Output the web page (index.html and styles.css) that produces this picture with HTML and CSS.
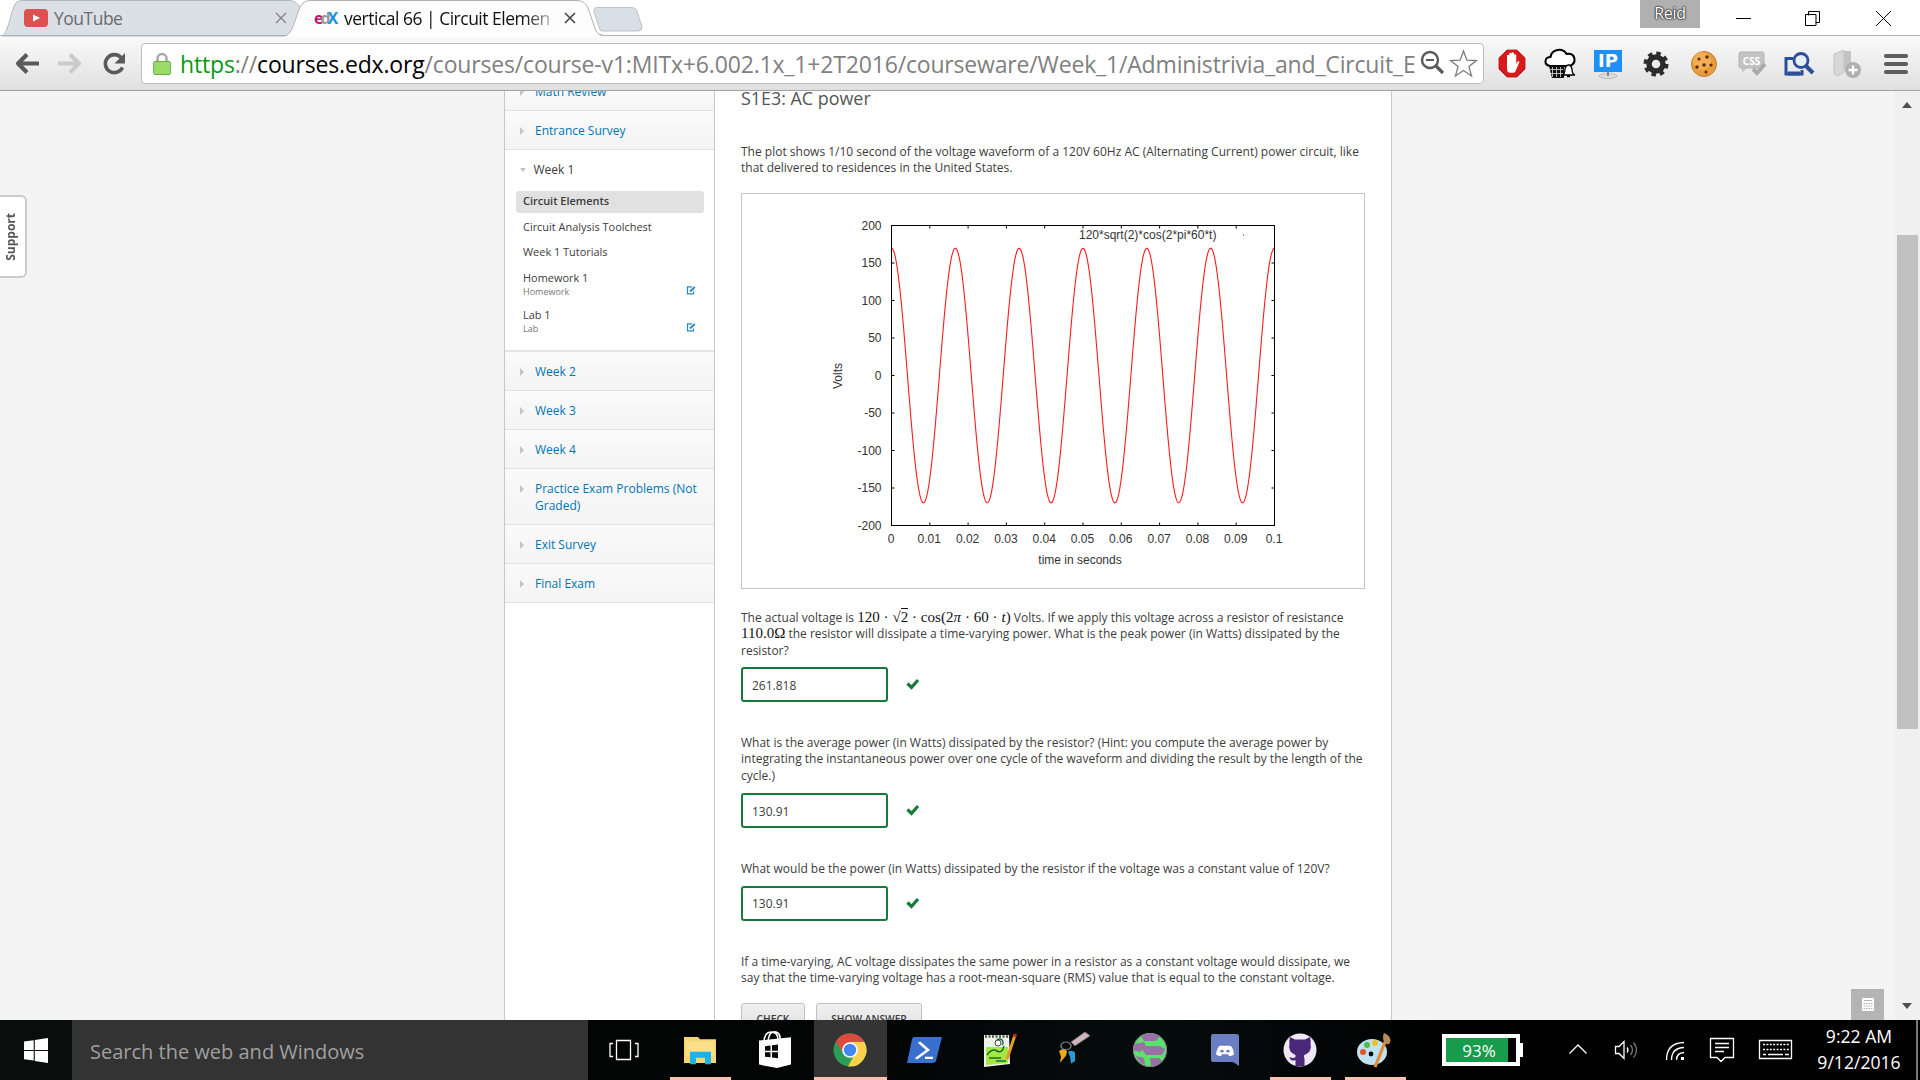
FILE: index.html
```html
<!DOCTYPE html>
<html lang="en">
<head>
<meta charset="utf-8">
<title>vertical 66 | Circuit Elements | edX</title>
<link rel="stylesheet" href="styles.css">
</head>
<body>
<div class="screen">
<header class="tabstrip">
  <svg class="tabshapes" width="660" height="37" viewBox="0 0 660 37">
    <path d="M2 36C9 34 11 6 17 2Q19 .5 23 .5H290Q297 1 300 8L309 36Z" fill="#dbe0e7" stroke="#b5b8bd"/>
    <path d="M600 30L594 12Q593 8 597 7.500H632Q636 8 637 11L642 27Q642 31 638 31H604Q601 31 600 30Z" fill="#d9dfe7" stroke="#bfc2c6"/>
    <path d="M284 37C294 34 297 8 303 3Q306 .5 310 .5H578Q585 1 588 8L596 31Q598 36 606 37Z" fill="#fdfdfd"/>
    <path d="M0 35.500H286C294 33 297 8 303 3Q306 .5 310 .5H578Q585 1 588 8L596 31Q598 35 604 35.500H660" fill="none" stroke="#b2b2b2"/>
  </svg>
  <div class="tab tab-yt">
    <svg width="24" height="18" viewBox="0 0 24 18"><rect width="24" height="18" rx="4" fill="#de5151"/><path d="M9 5.500v7l7-3.500z" fill="#fff"/></svg>
    <span>YouTube</span>
    <svg class="x" width="12" height="12" viewBox="0 0 12 12"><path d="M1 1l10 10M11 1L1 11" stroke="#858585" stroke-width="1.400"/></svg>
  </div>
  <div class="tab tab-edx">
    <span class="edx"><b class="e">e</b><b class="d">d</b><b class="ex">X</b></span>
    <span class="fade">vertical 66 | Circuit Elemen</span>
    <svg class="x" width="12" height="12" viewBox="0 0 12 12"><path d="M1 1l10 10M11 1L1 11" stroke="#444" stroke-width="1.600"/></svg>
  </div>
  <div class="profile">Reid</div>
  <svg class="winctl" width="160" height="18" viewBox="0 0 160 18" fill="none" stroke="#000"><path d="M0 8.500h15M72.500 5.500v-4h11v11h-4M69.500 4.500h10.500v11h-10.500zM140 1l15 15M155 1l-15 15"/></svg>
</header>
<nav class="toolbar">
  <svg class="navs" width="141" height="54" viewBox="0 0 141 54" fill="none" stroke-width="4.200" stroke-linejoin="round">
    <path d="M39 27.500H19M27 18.500l-9 9 9 9" stroke="#5a5a5a"/><path d="M58 27.500h20M70 18.500l9 9-9 9" stroke="#cbcbcb"/>
    <path d="M121 21.500a9 9 0 1 0 1.500 10" stroke="#5a5a5a" stroke-width="3.600"/><path d="M125 17v10.500h-10.500z" fill="#5a5a5a" stroke="none"/>
  </svg>
  <div class="omnibox">
    <svg class="lock" width="18" height="24" viewBox="0 0 18 24"><path d="M4.500 11V6.500a4.500 4.500 0 0 1 9 0V11" fill="none" stroke="#a9a9a9" stroke-width="2.500"/><rect x=".7" y="9.500" width="16.600" height="13" rx="1" fill="#9bdb6c" stroke="#63b236"/></svg>
    <span class="url"><span class="g">https</span>://<span class="k">courses.edx.org</span>/courses/course-v1:MITx+6.002.1x_1+2T2016/courseware/Week_1/Administrivia_and_Circuit_E</span>
    <svg class="omni-icons" width="60" height="30" viewBox="0 0 60 30" fill="none"><circle cx="12" cy="11" r="8" stroke="#5a5a5a" stroke-width="2.400"/><path d="M8 11h8" stroke="#5a5a5a" stroke-width="2"/><path d="M18 17l7 7" stroke="#5a5a5a" stroke-width="3.200"/><path d="M45.500 2l3.400 9.200 9.600.4-7.600 6 2.700 9.400-8.100-5.500-8.100 5.500 2.700-9.400-7.600-6 9.600-.4z" stroke="#7d7d7d" stroke-width="1.300"/></svg>
  </div>
  <svg class="exts" width="436" height="54" viewBox="1484 36 436 54">
    <path d="M1507 50h10l8 8v11l-8 8h-10l-8-8V58z" fill="#d91a1a" stroke="#b40d0d" stroke-width=".8"/><path d="M1507 61v-5.500q1.200-1.500 2.200 0V62v-8.500q1.200-1.500 2.400 0V61v-8q1.200-1.500 2.400 0v9-7q1.200-1.500 2.200 0v9l1.400-2.500q2-1 1.700.7l-3 7q-1 3.600-3 3.600h-3.300q-3 0-3-4z" fill="#fff"/>
    <path d="M1550 66q-5-1-4.500-5 .5-4 5-4 1-6 7-7 6-1 9 4 7-1 8 5 .6 5-5 7z" fill="#fff" stroke="#000" stroke-width="2"/><path d="M1549 66h15v12h-12z" fill="#111"/><path d="M1552.500 67v10M1556.500 67v10M1560.500 67v10M1550 69.500h13M1550 73.500h13" stroke="#ddd" stroke-width=".8"/><path d="M1562 75q3-1 3-6 1-4 3.500-4t3.500 4q0 5 3 6zM1567 76.500h3" fill="#fff" stroke="#000" stroke-width="1.300"/>
    <rect x="1594" y="50" width="28" height="22" fill="#1e90f5"/><ellipse cx="1608" cy="76" rx="9" ry="2.500" fill="#ddd" stroke="#aaa" stroke-width=".7"/><path d="M1608 72v4" stroke="#888" stroke-width="2"/><text x="1608" y="66.500" text-anchor="middle" class="svg-ip">IP</text>
    <g fill="none" stroke="#2c2c2c"><circle cx="1656" cy="64" r="7" stroke-width="5.500"/><circle cx="1656" cy="64" r="10.600" stroke-width="3.800" stroke-dasharray="4.400 3.920"/></g>
    <circle cx="1704" cy="64" r="12.500" fill="#e79b3b" stroke="#c87923"/><circle cx="1702" cy="61" r="9" fill="#f5b75c" opacity=".7"/><g fill="#5e2c10"><circle cx="1699" cy="59" r="1.600"/><circle cx="1707" cy="57" r="1.800"/><circle cx="1704" cy="65" r="1.800"/><circle cx="1711" cy="65" r="1.600"/><circle cx="1697" cy="67" r="1.800"/><circle cx="1706" cy="72" r="1.500"/></g>
    <rect x="1739" y="52" width="25" height="16" rx="2" fill="#c3c3c3" stroke="#b4b4b4"/><text x="1751.500" y="64.500" text-anchor="middle" class="svg-css">CSS</text><path d="M1753 69l4 4 8-9" stroke="#aaa" stroke-width="4" fill="none"/><path d="M1742 68v5l5-5" fill="#c3c3c3"/>
    <g fill="none" stroke="#2b4f9b"><path d="M1793 58.500h-7V74h16v-4" stroke-width="3"/><path d="M1788 73.500h12" stroke-width="4"/><circle cx="1801" cy="60.500" r="7" stroke-width="2.800" fill="#e9eef6"/><path d="M1806 66l7 7" stroke-width="4"/></g>
    <path d="M1834 74V54l10-4v22l-6 4z" fill="#d7d7d7" stroke="#c4c4c4"/><path d="M1844 51h7v18h-7z" fill="#c4c4c4"/><circle cx="1853" cy="70" r="8" fill="#b0b0b0"/><path d="M1848.500 70h9M1853 65.500v9" stroke="#fff" stroke-width="2.400"/>
    <path d="M1886 56h20M1886 64h20M1886 72h20" stroke="#5d5d5d" stroke-width="4.200" stroke-linecap="round"/>
  </svg>
</nav>
<main class="viewport">
  <div class="left-gutter"><div class="support"><span>Support</span></div></div>
  <aside class="side">
    <div class="row first"><i></i><span>Math Review</span></div>
    <div class="row"><i></i><span>Entrance Survey</span></div>
    <div class="open">
      <div class="open-head"><i></i><span>Week 1</span></div>
      <div class="item sel">Circuit Elements</div>
      <div class="item i2">Circuit Analysis Toolchest</div>
      <div class="item i3">Week 1 Tutorials</div>
      <div class="item two hw"><div><span>Homework 1</span><small>Homework</small></div><svg width="10" height="9" viewBox="0 0 10 9" fill="none" stroke="#2a88c0"><path d="M6 .8H1.500v7h6V5.500" stroke-width="1.200"/><path d="M4 5.500L8.800 1" stroke-width="2"/></svg></div>
      <div class="item two lab"><div><span>Lab 1</span><small>Lab</small></div><svg width="10" height="9" viewBox="0 0 10 9" fill="none" stroke="#2a88c0"><path d="M6 .8H1.500v7h6V5.500" stroke-width="1.200"/><path d="M4 5.500L8.800 1" stroke-width="2"/></svg></div>
    </div>
    <div class="row"><i></i><span>Week 2</span></div>
    <div class="row"><i></i><span>Week 3</span></div>
    <div class="row"><i></i><span>Week 4</span></div>
    <div class="row tall"><i></i><span>Practice Exam Problems (Not<br>Graded)</span></div>
    <div class="row"><i></i><span>Exit Survey</span></div>
    <div class="row"><i></i><span>Final Exam</span></div>
  </aside>
  <section class="content">
    <h2>S1E3: AC power</h2>
    <p class="p1">The plot shows 1/10 second of the voltage waveform of a 120V 60Hz AC (Alternating Current) power circuit, like<br>that delivered to residences in the United States.</p>
    <div class="figure"><svg id="plot" class="plot" width="622" height="393" viewBox="742 194 622 393"></svg></div>
    <p class="p2">The actual voltage is <span class="math wide">120 · <span class="rad">√</span><span class="over">2</span> · cos<span class="paren">(</span>2<i>π</i> · 60 · <i>t</i><span class="paren">)</span></span> Volts. If we apply this voltage across a resistor of resistance<br><span class="math">110.0Ω</span> the resistor will dissipate a time-varying power. What is the peak power (in Watts) dissipated by the<br>resistor?</p>
    <div class="answer"><div class="box">261.818</div><svg width="14" height="12" viewBox="0 0 14 12"><path d="M1.500 5.500l4 4L12 2" fill="none" stroke="#177a3b" stroke-width="3.200"/></svg></div>
    <p class="p3">What is the average power (in Watts) dissipated by the resistor? (Hint: you compute the average power by<br>integrating the instantaneous power over one cycle of the waveform and dividing the result by the length of the<br>cycle.)</p>
    <div class="answer"><div class="box">130.91</div><svg width="14" height="12" viewBox="0 0 14 12"><path d="M1.500 5.500l4 4L12 2" fill="none" stroke="#177a3b" stroke-width="3.200"/></svg></div>
    <p class="p4">What would be the power (in Watts) dissipated by the resistor if the voltage was a constant value of 120V?</p>
    <div class="answer"><div class="box b3">130.91</div><svg width="14" height="12" viewBox="0 0 14 12"><path d="M1.500 5.500l4 4L12 2" fill="none" stroke="#177a3b" stroke-width="3.200"/></svg></div>
    <p class="p5">If a time-varying, AC voltage dissipates the same power in a resistor as a constant voltage would dissipate, we<br>say that the time-varying voltage has a root-mean-square (RMS) value that is equal to the constant voltage.</p>
    <div class="buttons"><div class="btn check">CHECK</div><div class="btn show">SHOW ANSWER</div></div>
  </section>
  <div class="right-gutter"><div class="calc"><svg width="12" height="13" viewBox="0 0 12 13"><rect width="12" height="13" rx="1" fill="#fff"/><path d="M2 2.500h8" stroke="#b4b4b4"/><path d="M1.500 5.500h9M1.500 8h9M1.500 10.500h9" stroke="#b4b4b4" stroke-dasharray="1.500 1"/></svg></div></div>
  <div class="scroll"><b class="up"></b><div class="thumb"></div><b class="down"></b></div>
</main>
<footer class="taskbar">
  <div class="start"><svg width="24" height="25" viewBox="0 0 24 25" fill="#fff"><path d="M0 3.500l9.700-1.300V12H0zM10.800 2L24 0v12H10.800zM0 13h9.700v9.500L0 21.200zM10.800 13H24v12l-13.200-2z"/></svg></div>
  <div class="search">Search the web and Windows</div>
  <svg class="tasks" width="826" height="60" viewBox="588 1020 826 60">
    <g fill="none" stroke="#fff" stroke-width="1.300"><path d="M616.500 1040.500h14v19h-14zM613 1043.500h-3v13h3M635 1043.500h3v13h-3"/></g>
    <path d="M814 1020h73v60h-73z" fill="#343434"/><path d="M670 1077h61v3h-61zM814 1077h73v3h-73zM1270 1077h61v3h-61zM1345 1077h61v3h-61z" fill="#fbc1ae"/>
    <g transform="matrix(1 0 0 .74 0 269.600)"><path d="M684 1040v-3h14l2 3h16v32h-32z" fill="#f6d66f"/><path d="M686 1043h28v20h-28z" fill="#fbe08b"/><path d="M690 1074v-17h21v17h-6v-9h-9v9h-6z" fill="#1cb2ee"/></g>
    <g transform="matrix(1 0 0 .857 0 145)"><path d="M759 1045l32-4v32l-14 4-18-4z" fill="#fff"/><path d="M764 1048q0-13 7-13t7 9M768 1047q1-14 8-12 5 2 4 10" fill="none" stroke="#fff" stroke-width="1.600"/><path d="M765 1051.500l5.500-.8v6.300h-5.500zM772 1050.500l6-.8v7.300h-6zM765 1058.500h5.500v6l-5.500-.6zM772 1058.500h6v7l-6-.7z" fill="#0a0a0a"/></g>
    <g transform="translate(0 -10)"><circle cx="850" cy="1060" r="16.500" fill="#2c9c57"/><path d="M864.300 1051.800A16.500 16.500 0 0 1 848 1076.400L857 1060 850 1051.800z" fill="#fdd14b"/><path d="M835.700 1051.800A16.500 16.500 0 0 1 864.300 1051.800H850l-7 11z" fill="#dc4b3e"/><circle cx="850" cy="1060" r="7.800" fill="#fff"/><circle cx="850" cy="1060" r="6.200" fill="#4285f4"/></g>
    <g transform="matrix(1 0 0 .72 0 290.400)"><path d="M914 1037h28l-6 33q-.5 3-4 3h-25l5-33q1-3 2-3z" fill="#3a70cd"/><path d="M919 1044l9 11-12 12M925 1066h8" fill="none" stroke="#fff" stroke-width="3"/></g>
    <g><path d="M984 1035h25l1 29-26 3z" fill="#eef3ea"/><path d="M986 1047h22v16l-22 2z" fill="#a5e844"/><path d="M985 1036.500h23" stroke="#555" stroke-width="2.500" stroke-dasharray="2 1.500"/><path d="M987 1055q5-7 10-4t7-5M989 1058h12M997 1045a3.500 3.500 0 1 1 5 0M996 1061h10" fill="none" stroke="#176b28" stroke-width="1.500"/><circle cx="998" cy="1043" r="3" fill="#fff" stroke="#444"/><path d="M1007 1059l8-24" stroke="#e59b26" stroke-width="3"/><path d="M1014.500 1037l1-3" stroke="#c22" stroke-width="3"/></g>
    <g transform="matrix(1 0 0 .77 0 235.800)"><path d="M1071 1047l14-13 5 5-15 13z" fill="#c9b9bd" stroke="#85656d"/><circle cx="1066" cy="1052" r="5" fill="none" stroke="#777" stroke-width="1.500"/><path d="M1059 1059q4-5 8 0l-1 6-6 9 1-8z" fill="#eda81f"/><path d="M1068 1060q4-4 7 1v11l-4 3-1-9z" fill="#279bd4"/></g>
    <g><circle cx="1150" cy="1050" r="17" fill="#58e36b"/><path d="M1141 1036q9-5 19 0l-4 5h-12zM1135 1044l9-2 2 5-6 5-7-2zM1144 1046h16l5 3-3 6h-16l-3-4zM1136 1056l8 2 1 7q-6-2-9-9zM1150 1058h9l3 3q-5 6-11 5z" fill="#9b70a6"/><circle cx="1150" cy="1050" r="16.500" fill="none" stroke="#8c7a98"/></g>
    <g transform="matrix(1 0 0 .78 0 228.300)"><path d="M1213 1033h23q3 0 3 3v38l-6-5h-20q-2 0-2-3v-30q0-3 2-3z" fill="#6a7ec4"/><path d="M1216 1059q1-9 4-11h10q3 1 4 11-2 3-5 2l-1-2h-6l-1 2q-3 1-5-2z" fill="#fff"/><circle cx="1222" cy="1055" r="1.700" fill="#6a7ec4"/><circle cx="1228" cy="1055" r="1.700" fill="#6a7ec4"/></g>
    <g transform="translate(0 -10)"><circle cx="1300" cy="1060" r="16.500" fill="#eee8f5"/><path d="M1290 1047l5 2.500h10l5-2.500q1 4 .5 6 2 9-6 12-1 0 0 4v7h-9v-6q-5 2-6-3 4 2 6 0v-2q-8-3-6-12-.5-2 .5-6z" fill="#49287a"/></g>
    <g><ellipse cx="1372" cy="1052" rx="15" ry="13" fill="#bfe2f0"/><circle cx="1363" cy="1052" r="3" fill="#e2522f"/><circle cx="1367" cy="1045" r="3" fill="#55b848"/><circle cx="1375" cy="1043" r="3" fill="#eebf2b"/><circle cx="1371" cy="1054" r="2.400" fill="#05080b"/><path d="M1375 1067l10-25" stroke="#e38d3a" stroke-width="3.200"/><path d="M1384 1042q-2-5 0-9 8 3 6 10-3 3-6-1z" fill="#bd8a57"/></g>
  </svg>
  <div class="battery">93%</div>
  <svg class="tray" width="234" height="60" viewBox="1560 1020 234 60" fill="none" stroke="#fff" stroke-width="1.300">
    <path d="M1569.500 1053.500l8.500-8.500 8.500 8.500"/><path d="M1615.500 1046.500h3.500l5-5v17l-5-5h-3.500z"/><path d="M1627 1047.500q2 2.500 0 5"/><path d="M1630.500 1045q4 5 0 10M1633.500 1042.500q6 7.500 0 15" stroke="#777"/>
    <path d="M1666.500 1060q0-17 17.500-17.500M1671.500 1060q0-12 12.500-12.500M1676.500 1060q0-7 7.500-7.500"/><path d="M1681 1057h3v3h-3z" fill="#fff" stroke="none"/>
    <path d="M1710.500 1038.500h23v19h-8.500l-4 4-4-4h-6.500zM1715 1043.500h14M1715 1047.500h14M1715 1051.500h9M1759.500 1040.500h32v18h-32z"/><path d="M1763 1044.500h26M1763 1049.500h26" stroke-dasharray="2 1.400"/><path d="M1763 1054.500h3M1768 1054.500h15M1785 1054.500h4"/>
  </svg>
  <div class="clock"><span>9:22 AM</span><span>9/12/2016</span></div>
</footer>
</div>
<script src="plot.js"></script>
</body>
</html>
```
FILE: styles.css
```css
*{box-sizing:border-box}
body{margin:0;background:#fff;font-family:"Open Sans",sans-serif;color:#3c3c3c;overflow:hidden}
.screen{width:1920px;height:1080px;display:flex;flex-direction:column;overflow:hidden}
.tabstrip{height:36px;flex:none;display:flex;position:relative;border-bottom:1px solid #b2b2b2;background:#fff}
.tabshapes{position:absolute;left:0;top:0}
.tab{position:relative;display:flex;align-items:center;height:36px;flex:none;white-space:nowrap;font-size:17.5px;letter-spacing:-.5px}
.tab svg{flex:none}
.tab-yt{width:290px;padding-left:24px;color:#6c6c6c;gap:6px}
.tab-edx{width:350px;padding-left:24px;color:#111;gap:6px}
.tab .x{margin-left:auto}
.tab-yt .x{margin-right:3px}
.tab-edx .x{margin-right:64px}
.edx{display:flex;width:24px;font-size:16px;line-height:18px;letter-spacing:-1px}
.e{color:#b5186a}.d{color:#999;margin-left:-2px}.ex{color:#1a90e0;margin-left:-2px}
.fade{-webkit-mask-image:linear-gradient(90deg,#000 88%,rgba(0,0,0,.3))}
.profile{margin-left:1000px;width:60px;height:28px;background:#b0b0b0;color:#fff;font-size:16px;letter-spacing:-.3px;line-height:26px;text-align:center;text-shadow:0 0 2px #222,0 0 2px #222,0 0 1px #000}
.winctl{margin:10px 0 0 36px}
.toolbar{height:55px;flex:none;display:flex;align-items:flex-start;background:linear-gradient(#fafafa,#e0e0e0);border-bottom:1px solid #a3a3a3}
.navs,.exts,.lock,.omni-icons{flex:none}
.omnibox{width:1343px;height:41px;margin-top:7px;border:1px solid #bdbdbd;border-radius:4px;background:#fff;display:flex;align-items:center;padding:0 5px 0 11px;white-space:nowrap}
.url{margin-left:9px;font-size:23px;letter-spacing:-.17px;color:#808080;line-height:36px}
.url .g{color:#0b9713}.url .k{color:#000}
.omni-icons{margin-left:auto}
.svg-ip{font:bold 18px "DejaVu Sans",sans-serif;fill:#fff}
.svg-css{font:bold 10px "Open Sans",sans-serif;fill:#fff}
.viewport{height:929px;flex:1;display:flex;background:#f4f4f4;overflow:hidden;font-size:12px}
.left-gutter{width:504px;flex:none;padding-top:104px}
.support{width:27px;height:83px;border:2px solid #cbcbcb;border-left:0;border-radius:0 6px 6px 0;background:#fff;display:flex;align-items:center;justify-content:center;padding-right:5px}
.support span{writing-mode:vertical-rl;transform:rotate(180deg);font-weight:700;font-size:12px;color:#555}
.side{width:211px;flex:none;background:#fff;border-left:1px solid #c8c8c8;border-right:1px solid #c8c8c8;color:#0075b4}
.row{height:39px;border-bottom:1px solid #e2e2e2;background:linear-gradient(#fafafa,#f4f4f4);display:flex;padding:11px 0 0 15px;line-height:17px;font-size:12px;white-space:nowrap}
.row i{width:0;height:0;border:4px solid transparent;border-left:4px solid #c4c4c4;border-right:0;margin:5px 11px 0 0}
.row.first{height:19.5px;padding-top:0}
.row.first span,.row.first i{position:relative;top:-8px}
.row.tall{height:56px}
.open{height:202.500px;color:#3c3c3c;border-bottom:2px solid #e4e4e4}
.open-head{display:flex;padding:11px 0 0 15px;line-height:17px;height:41.500px;font-size:12px}
.open-head i{width:0;height:0;border:3.5px solid transparent;border-top:4px solid #c4c4c4;border-bottom:0;margin:7px 7.5px 0 0}
.item{margin:0 10px 0 11px;padding-left:7px;font-size:10.95px;line-height:20px;white-space:nowrap}
.sel{height:22px;background:#e1e1e1;border-radius:3px;font-weight:600}
.i2{padding-top:4px;height:28px}
.i3{padding-top:1px;height:29.5px}
.two{display:flex;justify-content:space-between;padding-right:8px}
.two>div{display:flex;flex-direction:column}
.two span{line-height:14px}
.two small{font-size:9px;line-height:13px;color:#777}
.hw{height:37px}.lab{height:32px}
.two svg{margin-top:15.5px}
.content{width:677px;flex:none;background:#fff;border-right:1px solid #c8c8c8;padding-left:26px;white-space:nowrap;font-size:12px;color:#3c3c3c}
h2{margin:-6px 0 0;font-weight:400;font-size:17.9px;line-height:26px;color:#555}
p{margin:0;line-height:16.3px}
.p1{padding-top:33px}
.figure{width:624px;height:396px;border:1px solid #c6c6c6;margin-top:16.4px;display:flex}
.plot{font:12px "Liberation Sans",sans-serif;fill:#333}
.p2{margin-top:20.6px;height:57px;line-height:16.6px}
.math{font-family:"Liberation Serif",serif;font-size:15px;color:#111;line-height:10px}
.wide{letter-spacing:.04px}
.over{border-top:1px solid #111}
.answer{display:flex;align-items:center;gap:18px;height:35px}
.box{width:147px;height:35px;border:2px solid #177a3b;border-radius:3px;padding-left:9px;line-height:33px}
.b3{line-height:31px}
.p3{margin-top:33px;height:58px;line-height:16.5px}
.p4{margin-top:33px;height:25px}
.p5{margin-top:33px;height:49.5px}
.buttons{display:flex;gap:11px}
.btn{height:34px;border:1px solid #c8bebe;border-radius:3px;background:linear-gradient(#f0f0f0,#dcdcdc);display:flex;justify-content:center;font-weight:600;font-size:10.2px;line-height:31px}
.check{width:64px}.show{width:106px}
.right-gutter{flex:1;display:flex;justify-content:flex-end;align-items:flex-end;padding-right:10px}
.calc{width:33px;height:31px;background:#b4b4b4;display:flex;align-items:center;justify-content:center}
.scroll{width:26px;flex:none;background:#f0f0f0;display:flex;flex-direction:column;align-items:center}
.scroll b{width:0;height:0;border:5px solid transparent}
.scroll .up{border-bottom:6px solid #505050;border-top:0;margin-top:11px}
.scroll .down{border-top:6px solid #505050;border-bottom:0;margin:auto 0 11px}
.thumb{width:21px;height:494px;background:#c1c1c1;margin-top:127px}
.taskbar{height:60px;flex:none;display:flex;background:linear-gradient(90deg,#030404 45%,#060c0d 60%,#010101 75%);color:#fff}
.start{width:72px;display:flex;align-items:center;justify-content:center;background:#090e0d}
.search{width:516px;background:#333;color:#a0a0a0;font-size:20px;padding-left:18px;line-height:63px;white-space:nowrap}
.battery{width:78px;height:32px;border:4px solid #fff;background:linear-gradient(90deg,#169c4b 62px,#000 62px);margin:14px 0 0 28px;font-size:17px;line-height:25px;text-align:center;position:relative;padding-right:4px}
.battery::after{content:"";position:absolute;right:-7px;top:5px;width:4px;height:14px;background:#fff}
.tray{margin-left:40px}
.clock{width:120px;border-right:2px solid #777;margin-left:4px;display:flex;flex-direction:column;align-items:center;font-size:17.6px;line-height:26px;padding:3px 0 0 4px}
```
FILE: plot.js
```js
// Plot frame in page pixels; the voltage axis runs from -200 to 200.
const X0 = 891.5, X1 = 1274.5, Y0 = 225.5, Y1 = 525.5, mid = (Y0 + Y1) / 2;
let s = '';
for (let i = 0; i <= 10; i++) {
  const x = X0 + (X1 - X0) * i / 10;
  s += `<path d="M${x} ${Y0}v3M${x} ${Y1}v-3" stroke="#000"/>`;
  s += `<text x="${x - 0.5}" y="543" text-anchor="middle">${i === 10 ? '0.1' : i === 0 ? '0' : '0.0' + i}</text>`;
}
for (let v = -200; v <= 200; v += 50) {
  const y = mid - v * (Y1 - Y0) / 400;
  s += `<path d="M${X0} ${y}h3M${X1} ${y}h-3" stroke="#000"/>`;
  s += `<text x="881.5" y="${y + 4}" text-anchor="end">${v}</text>`;
}
let d = '';
for (let i = 0; i <= 766; i++) {
  const t = i / 7660;
  const y = mid - 169.7 * Math.cos(2 * Math.PI * 60 * t) * (Y1 - Y0) / 400;
  d += (i ? 'L' : 'M') + (X0 + i / 2) + ' ' + y.toFixed(2);
}
s += `<path d="${d}" fill="none" stroke="#ff1a1a" stroke-width="1.1"/>`;
s += `<rect x="${X0}" y="${Y0}" width="${X1 - X0}" height="${Y1 - Y0}" fill="none" stroke="#000"/>`;
s += '<text x="1079" y="239">120*sqrt(2)*cos(2*pi*60*t)</text><text x="1080" y="564" text-anchor="middle">time in seconds</text>';
s += '<text transform="translate(842 376) rotate(-90)" text-anchor="middle">Volts</text><path d="M1243 235h1" stroke="red"/>';
document.getElementById('plot').innerHTML = s;
```
